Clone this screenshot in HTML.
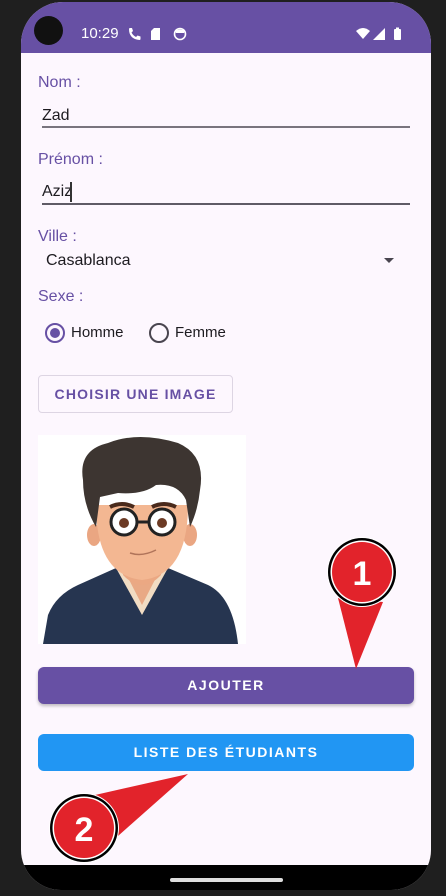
<!DOCTYPE html>
<html><head><meta charset="utf-8"><style>
*{margin:0;padding:0;box-sizing:border-box}
body{width:446px;height:896px;background:#1f1f1f;position:relative;overflow:hidden;font-family:"Liberation Sans",sans-serif}
.abs{position:absolute}
.screen{left:21px;top:2px;width:410px;height:888px;background:#FDF7FE;border-radius:42px 42px 40px 40px;overflow:hidden}
.lbl{color:#6750A4;font-size:16px}
.txt{color:#1d1b20;font-size:16px}
</style></head><body>
<div class="abs screen">
  <div class="abs" style="left:0;top:0;width:410px;height:51px;background:#6750A4"></div>
  <div class="abs" style="left:13px;top:14px;width:29px;height:29px;border-radius:50%;background:#111"></div>
  <div class="abs" style="left:60px;top:23px;color:#fff;font-size:15px">10:29</div>
  <svg class="abs" style="left:107px;top:25px" width="80" height="14" viewBox="0 0 80 14">
    <path d="M1 2 Q1 1 2 1 L4 1 L5 4 L3.5 5.5 Q5 8.5 8 10 L9.5 8.5 L12.5 9.5 L12.5 12 Q12.5 13 11.5 13 Q1 12 1 2Z" fill="#fff"/>
    <path d="M26 1 L32 1 L32 13 L23 13 L23 4 Z" fill="#fff"/>
    <circle cx="52" cy="7" r="5.5" fill="none" stroke="#fff" stroke-width="1.6"/>
    <path d="M47 6 Q52 1 57 6 L57 5 Q52 0 47 5Z" fill="#fff"/><rect x="48" y="3" width="8" height="3" fill="#fff"/>
  </svg>
  <svg class="abs" style="left:335px;top:25px" width="50" height="14" viewBox="0 0 50 14">
    <path d="M0 4 Q7 -2 14 4 L7 12 Z" fill="#fff"/>
    <path d="M17 13 L29 1 L29 13 Z" fill="#fff"/>
    <rect x="38" y="2" width="7" height="11" rx="1" fill="#fff"/><rect x="40" y="0.5" width="3" height="2" fill="#fff"/>
  </svg>

  <div class="abs lbl" style="left:17px;top:72px">Nom :</div>
  <div class="abs txt" style="left:21px;top:105px">Zad</div>
  <div class="abs" style="left:21px;top:124px;width:368px;height:1.5px;background:#79747e"></div>
  <div class="abs lbl" style="left:17px;top:149px">Prénom :</div>
  <div class="abs txt" style="left:21px;top:181px">Aziz</div>
  <div class="abs" style="left:49px;top:180px;width:2px;height:20px;background:#333"></div>
  <div class="abs" style="left:21px;top:201px;width:368px;height:2px;background:#5f5b66"></div>

  <div class="abs lbl" style="left:17px;top:226px">Ville :</div>
  <div class="abs txt" style="left:25px;top:250px">Casablanca</div>
  <div class="abs" style="left:363px;top:256px;width:0;height:0;border-left:5px solid transparent;border-right:5px solid transparent;border-top:5px solid #49454f"></div>
  <div class="abs lbl" style="left:17px;top:286px">Sexe :</div>
  <div class="abs" style="left:24px;top:321px;width:20px;height:20px;border-radius:50%;border:2px solid #6750A4"></div>
  <div class="abs" style="left:29px;top:326px;width:10px;height:10px;border-radius:50%;background:#6750A4"></div>
  <div class="abs" style="left:50px;top:322px;font-size:15px;color:#1d1b20">Homme</div>
  <div class="abs" style="left:128px;top:321px;width:20px;height:20px;border-radius:50%;border:2px solid #49454f"></div>
  <div class="abs" style="left:154px;top:322px;font-size:15px;color:#1d1b20">Femme</div>

  <div class="abs" style="left:17px;top:373px;width:195px;height:38px;border:1px solid #ddd5e3;border-radius:4px;background:#fdf7fe;color:#6750A4;font-size:14px;font-weight:bold;letter-spacing:1.2px;text-align:center;line-height:36px">CHOISIR UNE IMAGE</div>

  <svg class="abs" style="left:17px;top:433px" width="208" height="209" viewBox="0 0 208 209">
    <rect width="208" height="209" fill="#fff"/>
    <path d="M5 209 L10 180 Q18 160 40 150 L78 133 L130 133 L170 150 Q195 162 200 209Z" fill="#263550"/>
    <path d="M78 133 L104 180 L130 133 Z" fill="#f1dcc3"/>
    <path d="M85 133 L104 170 L123 133 Z" fill="#e9a985"/>
    <path d="M85 125 L85 140 Q104 160 123 140 L123 125Z" fill="#eba883"/>
    <ellipse cx="56" cy="100" rx="7" ry="11" fill="#eaa682"/><ellipse cx="152" cy="100" rx="7" ry="11" fill="#eaa682"/>
    <path d="M58 70 Q58 140 104 145 Q150 140 150 70 Z" fill="#f3b792"/>
    <path d="M45 45 Q40 15 70 8 Q100 -4 140 8 Q168 20 162 55 Q160 75 152 92 L148 65 Q140 48 118 50 Q105 60 80 58 L62 62 L58 92 Q45 70 45 45Z" fill="#3d3531"/>
    <circle cx="86" cy="87" r="13" fill="#fff" stroke="#222" stroke-width="3"/>
    <circle cx="124" cy="87" r="13" fill="#fff" stroke="#222" stroke-width="3"/>
    <circle cx="86" cy="88" r="5" fill="#6b3a24"/><circle cx="124" cy="88" r="5" fill="#6b3a24"/>
    <path d="M99 87 L111 87" stroke="#222" stroke-width="3"/>
    <path d="M72 72 Q84 66 96 72" stroke="#4a2a1c" stroke-width="4" fill="none"/>
    <path d="M114 72 Q126 66 138 72" stroke="#4a2a1c" stroke-width="4" fill="none"/>
    <path d="M92 118 Q104 122 118 115" stroke="#b0745a" stroke-width="1.5" fill="none"/>
  </svg>

  <div class="abs" style="left:17px;top:665px;width:376px;height:37px;background:#6750A4;border-radius:6px;box-shadow:0 2px 3px rgba(0,0,0,.25);color:#fff;font-size:14px;font-weight:bold;letter-spacing:1.5px;text-align:center;line-height:37px">AJOUTER</div>
  <div class="abs" style="left:17px;top:732px;width:376px;height:37px;background:#2196F3;border-radius:6px;color:#fff;font-size:14px;font-weight:bold;letter-spacing:1.5px;text-align:center;line-height:37px">LISTE DES ÉTUDIANTS</div>

  <svg class="abs" style="left:0;top:0" width="410" height="888" viewBox="21 2 410 888">
    <path d="M338 598 L356 669 L383 602 Z" fill="#e2232b"/>
    <circle cx="362" cy="572" r="35" fill="#fff"/><circle cx="362" cy="572" r="34" fill="#000"/><circle cx="362" cy="572" r="31.5" fill="#fff"/><circle cx="362" cy="572" r="30" fill="#e2232b"/>
    <text x="362" y="585" text-anchor="middle" fill="#fff" font-size="34" font-weight="bold" font-family="Liberation Sans">1</text>
    <path d="M95 795 L188 774 L118 836 Z" fill="#e2232b"/>
    <circle cx="84" cy="828" r="35" fill="#fff"/><circle cx="84" cy="828" r="34" fill="#000"/><circle cx="84" cy="828" r="31.5" fill="#fff"/><circle cx="84" cy="828" r="30" fill="#e2232b"/>
    <text x="84" y="841" text-anchor="middle" fill="#fff" font-size="34" font-weight="bold" font-family="Liberation Sans">2</text>
  </svg>

  <div class="abs" style="left:0;top:863px;width:410px;height:25px;background:#000"></div>
  <div class="abs" style="left:149px;top:876px;width:113px;height:4px;border-radius:2px;background:#ddd"></div>
</div>
</body></html>
